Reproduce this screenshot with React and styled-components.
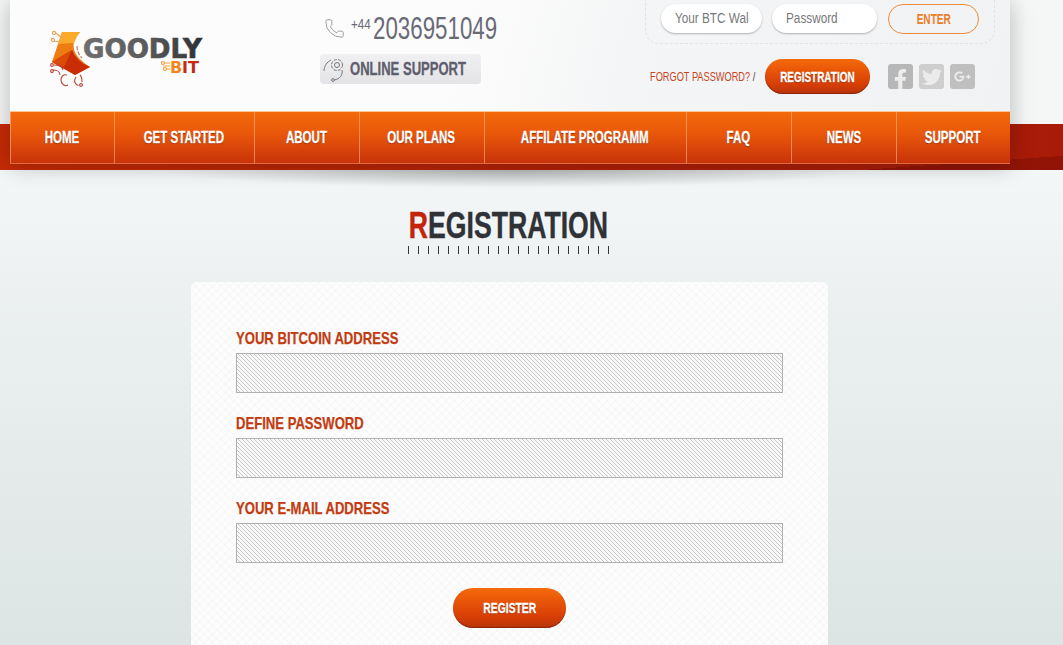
import React from 'react';
import styled, { createGlobalStyle } from 'styled-components';
import { Phone } from 'lucide-react';
import { FaFacebookF, FaTwitter, FaGooglePlusG } from 'react-icons/fa';

const sans = `"Liberation Sans", Arial, sans-serif`;

const navItems = [
  { label: 'HOME', width: 104 },
  { label: 'GET STARTED', width: 140 },
  { label: 'ABOUT', width: 105 },
  { label: 'OUR PLANS', width: 125 },
  { label: 'AFFILATE PROGRAMM', width: 202 },
  { label: 'FAQ', width: 105 },
  { label: 'NEWS', width: 105 },
  { label: 'SUPPORT', width: 114 },
];

const fields = ['YOUR BITCOIN ADDRESS', 'DEFINE PASSWORD', 'YOUR E-MAIL ADDRESS'];

const GlobalStyle = createGlobalStyle`
  html, body {
    margin: 0;
    height: 645px;
    overflow: hidden;
    background: #e2e9e8;
    font-family: ${sans};
  }
`;

// the reference font is a condensed grotesque, none is installed so we squeeze Liberation Sans
const Squeeze = styled.span`
  display: inline-block;
  white-space: nowrap;
  transform: scaleX(${(props) => props.$x || 0.72});
  transform-origin: ${(props) => props.$origin || 'center'};
`;

const Page = styled.div`
  width: 1063px;
  height: 645px;
  overflow: hidden;
  background: linear-gradient(#f4f7f7 170px, #ecf0f0 300px, #dce5e4 645px);
`;

const Hero = styled.div`
  height: 170px;
  padding-left: 10px;
  background:
    linear-gradient(176deg, transparent 78%, rgba(110, 10, 5, 0.4) 78%) 800px 124px / 263px 46px no-repeat,
    linear-gradient(90deg, #c72b05, #b0200a 60%, #a81b08) 0 124px / 100% 46px no-repeat,
    #f5f6f6;
`;

const Header = styled.header`
  width: 1000px;
  height: 164px;
  box-shadow: 0 2px 22px rgba(0, 0, 0, 0.26);
`;

const TopRow = styled.div`
  display: flex;
  height: 111px;
  background: linear-gradient(105deg, #fcfcfc 45%, #f4f5f6 62%, #f1f2f3);
`;

const LogoBlock = styled.div`
  width: 310px;
  padding: 30px 0 0 40px;
  box-sizing: border-box;
`;

const ContactBlock = styled.div`
  width: 325px;
  display: flex;
  flex-direction: column;
`;

const PhoneLine = styled.div`
  display: flex;
  align-items: flex-start;
  height: 54px;
  padding: 12px 0 0 4px;
  box-sizing: border-box;
  color: #6a6a76;
  svg {
    margin: 6px 6px 0 0;
    color: #8f9296;
  }
`;

const PhonePrefix = styled.span`
  width: 22px;
  font-size: 15px;
  line-height: 18px;
  margin-top: 3px;
`;

const PhoneNumber = styled.span`
  font-size: 31px;
  line-height: 33px;
`;

const SupportBadge = styled.div`
  width: 161px;
  height: 30px;
  display: flex;
  align-items: center;
  gap: 2px;
  padding-left: 2px;
  box-sizing: border-box;
  border-radius: 4px;
  background: linear-gradient(#f0f0f2, #e4e4e6);
  color: #5e5e6e;
  font-size: 18px;
  font-weight: 700;
  -webkit-text-stroke: 0.3px #5e5e6e;
  svg {
    flex: none;
  }
`;

const LoginBlock = styled.div`
  width: 350px;
  display: flex;
  flex-direction: column;
`;

const LoginBox = styled.div`
  height: 44px;
  display: flex;
  align-items: flex-start;
  padding: 4px 0 0 15px;
  box-sizing: border-box;
  border: 1px dashed #e2e3e5;
  border-top: 0;
  border-radius: 0 0 14px 14px;
`;

const PillField = styled.div`
  width: ${(props) => props.$width}px;
  height: 29px;
  margin-right: ${(props) => props.$gap}px;
  padding-left: 14px;
  box-sizing: border-box;
  border-radius: 15px;
  background: #fff;
  box-shadow: 0 1px 2px rgba(0, 0, 0, 0.28);
  color: #77787c;
  font-size: 14px;
  line-height: 29px;
  overflow: hidden;
`;

const EnterButton = styled.button`
  width: 91px;
  height: 30px;
  padding: 0;
  border: 1px solid #ed8a3c;
  border-radius: 15px;
  background: transparent;
  color: #ec7d28;
  font-family: ${sans};
  font-size: 14px;
  font-weight: 700;
`;

const AccountRow = styled.div`
  display: flex;
  align-items: center;
  height: 35px;
  margin-top: 15px;
  padding-left: 5px;
`;

const ForgotLink = styled.a`
  display: block;
  width: 115px;
  color: #c5461c;
  font-size: 13px;
  i {
    font-style: normal;
    color: #444;
  }
`;

const PillButton = styled.button`
  width: ${(props) => props.$width}px;
  height: ${(props) => props.$height}px;
  padding: 0;
  border: 0;
  border-radius: 20px;
  background: linear-gradient(#f56a0b, #d93f06 70%, #b8340c);
  box-shadow: inset 0 -1px 1px rgba(90, 20, 0, 0.5);
  color: #fff;
  font-family: ${sans};
  font-size: ${(props) => props.$size}px;
  font-weight: 700;
  -webkit-text-stroke: 0.3px #fff;
  text-shadow: 0 1px 1px rgba(90, 20, 0, 0.5);
`;

const SocialList = styled.div`
  display: flex;
  gap: 6px;
  margin-left: 18px;
`;

const SocialIcon = styled.div`
  width: 25px;
  height: 25px;
  display: flex;
  align-items: ${(props) => (props.$low ? 'flex-end' : 'center')};
  justify-content: center;
  overflow: hidden;
  border-radius: 3px;
  background: ${(props) => props.$bg};
  color: ${(props) => props.$fg};
`;

const Nav = styled.nav`
  display: flex;
  height: 53px;
  box-sizing: border-box;
  border-top: 1px solid #fbc596;
  background: linear-gradient(#f2690a, #e9580a 40%, #c8320a);
`;

const NavItem = styled.a`
  width: ${(props) => props.$width}px;
  display: flex;
  align-items: center;
  justify-content: center;
  box-sizing: border-box;
  padding-right: 1px;
  border-left: 1px solid rgba(255, 190, 140, 0.55);
  border-bottom: 1px solid rgba(255, 190, 140, 0.4);
  color: #fff;
  font-size: 16px;
  font-weight: 700;
  -webkit-text-stroke: 0.3px #fff;
  text-shadow: 0 1px 1px rgba(90, 20, 0, 0.6);
`;

const Main = styled.main`
  width: 999px;
  margin-left: 10px;
  display: flex;
  flex-direction: column;
  align-items: center;
  padding-top: 38px;
  background: radial-gradient(ellipse 350px 18px at 500px 0, rgba(0, 0, 0, 0.24), transparent) no-repeat;
`;

const Title = styled.h1`
  margin: 0 2px 0 0;
  color: #2f3237;
  font-size: 37px;
  line-height: 36px;
  font-weight: 700;
  -webkit-text-stroke: 0.4px #2f3237;
  span span {
    color: #c4240c;
    -webkit-text-stroke-color: #c4240c;
  }
`;

const Ticks = styled.div`
  width: 203px;
  height: 8px;
  margin-top: 2px;
  background: repeating-linear-gradient(90deg, #33363a 0 1px, transparent 1px 10px);
`;

const Card = styled.form`
  width: 637px;
  height: 400px;
  margin-top: 28px;
  padding: 47px 45px 0;
  box-sizing: border-box;
  border-radius: 6px 6px 0 0;
  background:
    repeating-linear-gradient(45deg, rgba(0, 0, 0, 0.012) 0 2px, transparent 2px 6px),
    repeating-linear-gradient(-45deg, rgba(0, 0, 0, 0.012) 0 2px, transparent 2px 6px),
    #fdfdfd;
`;

const Field = styled.div`
  margin-bottom: 21px;
`;

const Label = styled.label`
  display: block;
  height: 24px;
  color: #c23c12;
  font-size: 17px;
  line-height: 20px;
  font-weight: 700;
  -webkit-text-stroke: 0.25px #c23c12;
`;

const HatchedInput = styled.input`
  display: block;
  width: 547px;
  height: 40px;
  box-sizing: border-box;
  border: 1px solid #b0b0b0;
  background:
    linear-gradient(45deg, #c8c8c8 12.5%, #f8f8f8 12.5%, #f8f8f8 50%, #c8c8c8 50%, #c8c8c8 62.5%, #f8f8f8 62.5%) 0 0 / 4px 4px;
`;

const FormActions = styled.div`
  display: flex;
  justify-content: center;
  margin-top: 25px;
`;

const Logo = () => (
  <svg width="155" height="60" viewBox="0 0 155 60">
    <defs>
      <linearGradient id="goodly" x1="0" x2="1" y1="0" y2="0">
        <stop offset="0" stopColor="#6e6e6e" />
        <stop offset="0.55" stopColor="#5a5a5a" />
        <stop offset="1" stopColor="#2c2f33" />
      </linearGradient>
    </defs>
    {/* folded paper shape */}
    <path d="M12 2h18Q13 20 40 37L25 45 2 32z" fill="#ee7c12" />
    <path d="M12 2h18q-4 5-6 11L8 14z" fill="#fbaa2a" />
    <path d="M2 32l20-12Q26 31 40 37L25 45z" fill="#c92d06" />
    <path d="M2 32l20-12-8 17z" fill="#dc4a08" />
    <g fill="none" stroke="#b8473a" strokeWidth="1.1">
      <path d="M12 8L6 3M10 12L4 11" stroke="#e8a060" />
      <circle cx="4" cy="3" r="1.6" stroke="#e8a060" />
      <circle cx="3" cy="10" r="1.6" stroke="#e8a060" />
      <path d="M4 35c4 0 8 1 9 5M3 40c4 0 7 2 7 5M17 45c-4-1-6 2-6 5 0 4 4 7 7 5M26 47c-2 3-2 5 0 7 2 2 2 0 2 2M30 45c2 2 2 4 2 7" />
      <circle cx="2" cy="35" r="1.4" />
      <circle cx="2" cy="41" r="1.4" />
      <circle cx="31" cy="55" r="1.4" />
      <path d="M27 16c0 5 2 9 5 12" stroke="#c9765f" strokeDasharray="4 1.5" />
    </g>
    {/* wordmark */}
    <text x="33" y="28" fontFamily="'DejaVu Sans', sans-serif" fontWeight="700" fontSize="27" fill="url(#goodly)" stroke="url(#goodly)" strokeWidth="0.7" textLength="119" lengthAdjust="spacingAndGlyphs">GOODLY</text>
    <text x="120" y="43" fontFamily="'DejaVu Sans', sans-serif" fontWeight="700" fontSize="16" fill="#f2871c">B</text>
    <text x="132" y="43" fontFamily="'DejaVu Sans', sans-serif" fontWeight="700" fontSize="16" fill="#c62a10">IT</text>
    <g fill="none" stroke="#f2a040" strokeWidth="1.2">
      <circle cx="113" cy="33" r="1.5" />
      <circle cx="115" cy="39" r="1.5" />
      <path d="M115 33h5M117 39h3M113 36h7" />
    </g>
  </svg>
);

const SupportIcon = () => (
  <svg width="26" height="28" viewBox="0 0 26 28" fill="none" stroke="#77787e" strokeWidth="1">
    <circle cx="15" cy="10" r="2.5" />
    <circle cx="15" cy="10" r="5.5" strokeDasharray="3 1.4" />
    <path d="M9 5C5 7 2 11 2 16M20 15c1 5-2 9-8 10" />
    <circle cx="11" cy="25" r="1.4" />
  </svg>
);

export default function App() {
  return (
    <Page>
      <GlobalStyle />
      <Hero>
        <Header>
          <TopRow>
            <LogoBlock>
              <Logo />
            </LogoBlock>
            <ContactBlock>
              <PhoneLine>
                <Phone size={21} strokeWidth={1} />
                <PhonePrefix>
                  <Squeeze $x={0.77} $origin="left">+44</Squeeze>
                </PhonePrefix>
                <PhoneNumber>
                  <Squeeze $origin="left">2036951049</Squeeze>
                </PhoneNumber>
              </PhoneLine>
              <SupportBadge>
                <SupportIcon />
                <Squeeze $x={0.725} $origin="left">ONLINE SUPPORT</Squeeze>
              </SupportBadge>
            </ContactBlock>
            <LoginBlock>
              <LoginBox>
                <PillField $width={101} $gap={10}>
                  <Squeeze $x={0.84} $origin="left">Your BTC Wal</Squeeze>
                </PillField>
                <PillField $width={105} $gap={11}>
                  <Squeeze $x={0.84} $origin="left">Password</Squeeze>
                </PillField>
                <EnterButton type="button">
                  <Squeeze>ENTER</Squeeze>
                </EnterButton>
              </LoginBox>
              <AccountRow>
                <ForgotLink>
                  <Squeeze $x={0.71} $origin="left">
                    FORGOT PASSWORD? <i>/</i>
                  </Squeeze>
                </ForgotLink>
                <PillButton type="button" $width={105} $height={35} $size={14}>
                  <Squeeze $x={0.71}>REGISTRATION</Squeeze>
                </PillButton>
                <SocialList>
                  <SocialIcon $bg="#b7b7b7" $fg="#ececec" $low>
                    <FaFacebookF size={21} style={{ marginBottom: -1 }} />
                  </SocialIcon>
                  <SocialIcon $bg="#cecece" $fg="#ebebeb">
                    <FaTwitter size={20} />
                  </SocialIcon>
                  <SocialIcon $bg="#bfbfbf" $fg="#ececec">
                    <FaGooglePlusG size={17} />
                  </SocialIcon>
                </SocialList>
              </AccountRow>
            </LoginBlock>
          </TopRow>
          <Nav>
            {navItems.map((item) => (
              <NavItem key={item.label} $width={item.width}>
                <Squeeze>{item.label}</Squeeze>
              </NavItem>
            ))}
          </Nav>
        </Header>
      </Hero>
      <Main>
        <Title>
          <Squeeze>
            <span>R</span>EGISTRATION
          </Squeeze>
        </Title>
        <Ticks />
        <Card>
          {fields.map((label) => (
            <Field key={label}>
              <Label>
                <Squeeze $x={0.77} $origin="left">{label}</Squeeze>
              </Label>
              <HatchedInput />
            </Field>
          ))}
          <FormActions>
            <PillButton type="button" $width={113} $height={40} $size={14}>
              <Squeeze $x={0.74}>REGISTER</Squeeze>
            </PillButton>
          </FormActions>
        </Card>
      </Main>
    </Page>
  );
}
